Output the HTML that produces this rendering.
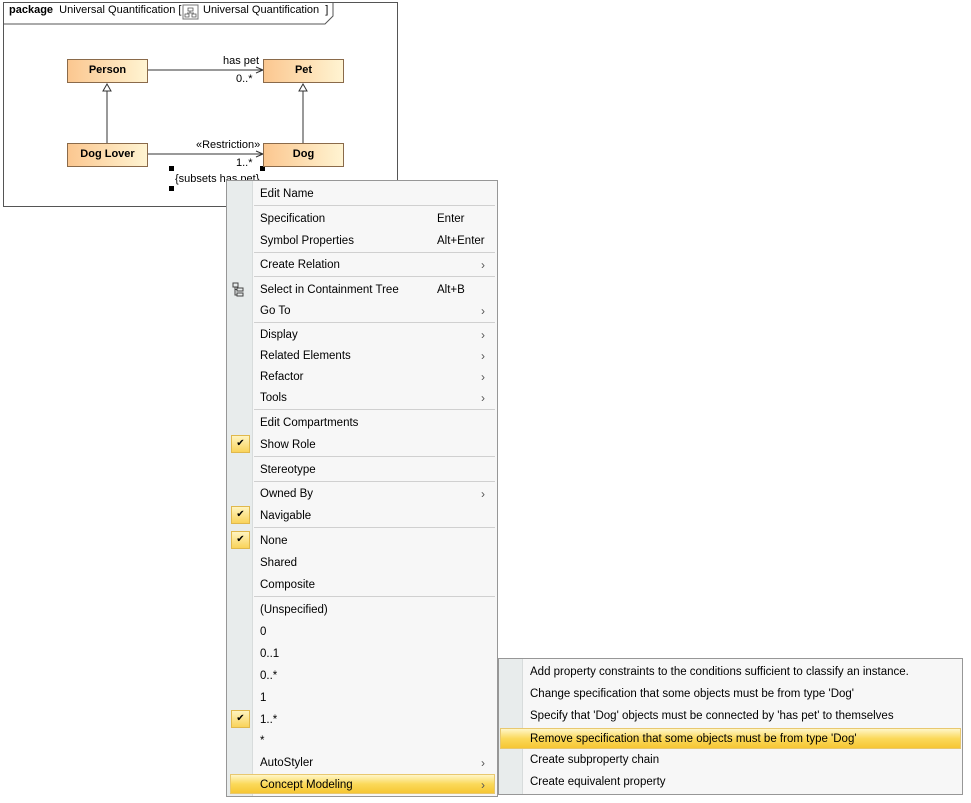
<!DOCTYPE html>
<html><head><meta charset="utf-8"><style>
*{margin:0;padding:0;box-sizing:border-box}
body{width:971px;height:803px;background:#fff;position:relative;overflow:hidden;font-family:"Liberation Sans",sans-serif;font-size:11px;color:#000}
.a{position:absolute}
.cls{position:absolute;width:81px;height:24px;border:1px solid #8a6a4a;background:linear-gradient(to right,#fbc790,#fff4d2);font-weight:bold;font-size:11px;text-align:center;line-height:21px}
.menu{position:absolute;background:#f7f7f7;border:1px solid #979797}
.gut{position:absolute;left:0;top:0;bottom:0;background:#e8ecec;border-right:1px solid #d8dcdc}
.it{position:absolute;font-size:11.5px;line-height:16px;white-space:nowrap;margin-top:1px}
.sep{position:absolute;height:1px;background:#d0d0d0}
.ar{position:absolute;font-size:12px;color:#555;margin-top:1px}
.chk{position:absolute;left:4px;width:19px;height:18px;border:1px solid #e0b84c;background:linear-gradient(#fff4c0,#f9d35a);font-size:10px;text-align:center;line-height:16px}
.hl{position:absolute;background:linear-gradient(#fff6c8,#fbd95a 50%,#f6c634);border:1px solid #e8c870}
</style></head><body>
<div class="a" style="left:3px;top:2px;width:395px;height:205px;border:1px solid #555"></div>
<svg class="a" style="left:0;top:0" width="400" height="210">
<path d="M3 24 H325 L333 16 V2" fill="none" stroke="#555"/>
<rect x="183" y="5" width="15" height="14" fill="#fff" stroke="#777"/>
<path d="M188 8h5v3h-5z M185 14h4v3h-4z M192 14h4v3h-4z M190 11v2 M187 13h7" fill="none" stroke="#555" stroke-width="0.8"/>
<line x1="148" y1="70" x2="262" y2="70" stroke="#333"/>
<path d="M256 67 L263 70 L256 73" fill="none" stroke="#333"/>
<line x1="148" y1="154" x2="262" y2="154" stroke="#333"/>
<path d="M256 151 L263 154 L256 157" fill="none" stroke="#333"/>
<line x1="107" y1="91" x2="107" y2="143" stroke="#333"/>
<path d="M103 91 L107 84 L111 91 Z" fill="#fff" stroke="#333"/>
<line x1="303" y1="91" x2="303" y2="143" stroke="#333"/>
<path d="M299 91 L303 84 L307 91 Z" fill="#fff" stroke="#333"/>
<rect x="169" y="166" width="5" height="5" fill="#000"/>
<rect x="169" y="186" width="5" height="5" fill="#000"/>
<rect x="260" y="166" width="5" height="5" fill="#000"/>
</svg>
<div class="a" style="left:9px;top:4px;font-size:11px"><b>package</b>&nbsp; Universal Quantification [</div>
<div class="a" style="left:203px;top:4px;font-size:11px">Universal Quantification&nbsp; ]</div>
<div class="cls" style="left:67px;top:59px">Person</div>
<div class="cls" style="left:263px;top:59px">Pet</div>
<div class="cls" style="left:67px;top:143px">Dog Lover</div>
<div class="cls" style="left:263px;top:143px">Dog</div>
<div class="a" style="left:223px;top:55px;font-size:11px">has pet</div>
<div class="a" style="left:236px;top:73px;font-size:11px">0..*</div>
<div class="a" style="left:196px;top:139px;font-size:11px">«Restriction»</div>
<div class="a" style="left:236px;top:157px;font-size:11px">1..*</div>
<div class="a" style="left:175px;top:173px;font-size:11px">{subsets has pet}</div>

<div class="menu" style="left:226px;top:180px;width:272px;height:617px">
<div class="gut" style="width:26px"></div>
<div class="hl" style="left:3px;top:593px;width:265px;height:20px"></div>
</div>
<svg class="a" style="left:231px;top:281px" width="16" height="16"><path d="M2 2h5v4H2z M6 7h6v3H6z M6 12h6v3H6z M4 6v8h2 M4 8.5h2" fill="none" stroke="#444" stroke-width="1"/></svg>
<div class="chk" style="left:231px;top:435px">✔</div>
<div class="chk" style="left:231px;top:506px">✔</div>
<div class="chk" style="left:231px;top:531px">✔</div>
<div class="chk" style="left:231px;top:710px">✔</div>
<div class="sep" style="left:254px;top:205px;width:241px"></div>
<div class="sep" style="left:254px;top:252px;width:241px"></div>
<div class="sep" style="left:254px;top:276px;width:241px"></div>
<div class="sep" style="left:254px;top:322px;width:241px"></div>
<div class="sep" style="left:254px;top:409px;width:241px"></div>
<div class="sep" style="left:254px;top:456px;width:241px"></div>
<div class="sep" style="left:254px;top:481px;width:241px"></div>
<div class="sep" style="left:254px;top:527px;width:241px"></div>
<div class="sep" style="left:254px;top:596px;width:241px"></div>
<div class="it" style="left:260px;top:185px">Edit Name</div>
<div class="it" style="left:260px;top:210px">Specification</div><div class="it" style="left:437px;top:210px">Enter</div>
<div class="it" style="left:260px;top:232px">Symbol Properties</div><div class="it" style="left:437px;top:232px">Alt+Enter</div>
<div class="it" style="left:260px;top:256px">Create Relation</div><div class="ar" style="left:481px;top:257px">›</div>
<div class="it" style="left:260px;top:281px">Select in Containment Tree</div><div class="it" style="left:437px;top:281px">Alt+B</div>
<div class="it" style="left:260px;top:302px">Go To</div><div class="ar" style="left:481px;top:303px">›</div>
<div class="it" style="left:260px;top:326px">Display</div><div class="ar" style="left:481px;top:327px">›</div>
<div class="it" style="left:260px;top:347px">Related Elements</div><div class="ar" style="left:481px;top:348px">›</div>
<div class="it" style="left:260px;top:368px">Refactor</div><div class="ar" style="left:481px;top:369px">›</div>
<div class="it" style="left:260px;top:389px">Tools</div><div class="ar" style="left:481px;top:390px">›</div>
<div class="it" style="left:260px;top:414px">Edit Compartments</div>
<div class="it" style="left:260px;top:436px">Show Role</div>
<div class="it" style="left:260px;top:461px">Stereotype</div>
<div class="it" style="left:260px;top:485px">Owned By</div><div class="ar" style="left:481px;top:486px">›</div>
<div class="it" style="left:260px;top:507px">Navigable</div>
<div class="it" style="left:260px;top:532px">None</div>
<div class="it" style="left:260px;top:554px">Shared</div>
<div class="it" style="left:260px;top:576px">Composite</div>
<div class="it" style="left:260px;top:601px">(Unspecified)</div>
<div class="it" style="left:260px;top:623px">0</div>
<div class="it" style="left:260px;top:645px">0..1</div>
<div class="it" style="left:260px;top:667px">0..*</div>
<div class="it" style="left:260px;top:689px">1</div>
<div class="it" style="left:260px;top:711px">1..*</div>
<div class="it" style="left:260px;top:732px">*</div>
<div class="it" style="left:260px;top:754px">AutoStyler</div><div class="ar" style="left:481px;top:755px">›</div>
<div class="it" style="left:260px;top:776px">Concept Modeling</div><div class="ar" style="left:481px;top:777px">›</div>

<div class="menu" style="left:498px;top:658px;width:465px;height:137px">
<div class="gut" style="width:24px"></div>
<div class="hl" style="left:1px;top:69px;width:461px;height:21px"></div>
</div>
<div class="it" style="left:530px;top:663px">Add property constraints to the conditions sufficient to classify an instance.</div>
<div class="it" style="left:530px;top:685px">Change specification that some objects must be from type 'Dog'</div>
<div class="it" style="left:530px;top:707px">Specify that 'Dog' objects must be connected by 'has pet' to themselves</div>
<div class="it" style="left:530px;top:730px">Remove specification that some objects must be from type 'Dog'</div>
<div class="it" style="left:530px;top:751px">Create subproperty chain</div>
<div class="it" style="left:530px;top:773px">Create equivalent property</div>
</body></html>
